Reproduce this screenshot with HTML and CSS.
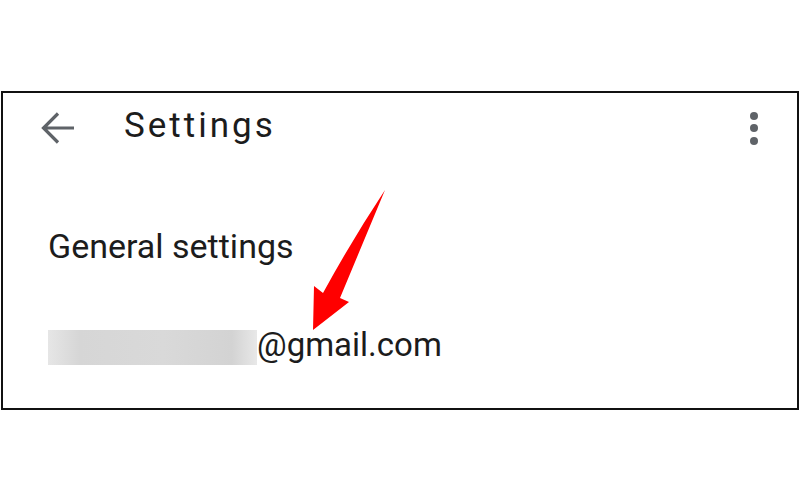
FILE: index.html
```html
<!DOCTYPE html>
<html lang="en">
<head>
    <meta charset="UTF-8">
    <title>Settings</title>
    <link rel="stylesheet" href="styles.css">
</head>
<body>
    <div class="screen">
        <div class="toolbar">
            <button class="icon-btn back" aria-label="Back">
                <svg width="36" height="36" viewBox="0 0 36 36">
                    <path d="M34 18H4M18 3.5L3.5 18L18 32.5" fill="none" stroke="#5f6368" stroke-width="3.2"/>
                </svg>
            </button>
            <h1>Settings</h1>
            <button class="icon-btn more" aria-label="More options">
                <span class="dot"></span>
                <span class="dot"></span>
                <span class="dot"></span>
            </button>
        </div>
        <div class="list">
            <div class="item">General settings</div>
            <div class="item account"><span class="blur"></span>@gmail.com</div>
        </div>
        <!-- red pointer drawn over the list -->
        <svg class="pointer" width="100" height="155" viewBox="0 0 100 155">
            <path d="M95 10 Q70 70 50 118 L59 122 L23 150 L24 106 L33 113 Q62 60 95 10 Z" fill="#ff0000"/>
        </svg>
    </div>
</body>
</html>
```

FILE: styles.css
```css
body {
    margin: 0;
    background-color: #fff;
    font-family: Roboto, "Noto Sans", sans-serif;
    color: #1c1c1c;
}
.screen {
    position: relative;
    margin-top: 91px;
    margin-left: 1px;
    width: 794px;
    height: 315px;
    border: 2px solid #111;
    background-color: #fff;
}
.toolbar {
    display: flex;
    align-items: center;
    height: 70px;
    padding-left: 37px;
}
.icon-btn {
    background: none;
    border: none;
    padding: 0;
    cursor: pointer;
}
.back {
    width: 36px;
    height: 36px;
    display: flex;
}
.toolbar h1 {
    flex: 1;
    margin: 0 0 5px 48px;
    font-size: 35px;
    font-weight: 400;
    letter-spacing: 3px;
}
.more {
    display: flex;
    flex-direction: column;
    align-items: center;
    gap: 4.5px;
    width: 20px;
    margin-right: 33px;
}
.dot {
    width: 8px;
    height: 8px;
    border-radius: 50%;
    background-color: #5f6368;
}
.list {
    padding: 63px 0 0 45px;
}
.item {
    font-size: 34px;
    line-height: 40px;
}
.item + .item {
    margin-top: 59px;
}
.account {
    font-size: 33px;
}
.blur {
    display: inline-block;
    width: 209px;
    height: 35px;
    vertical-align: -9px;
    background: linear-gradient(90deg, #e6e6e6, #d6d6d6 15%, #d9d9d9 55%, #d3d3d3 88%, #e8e8e8);
}
.pointer {
    position: absolute;
    left: 287px;
    top: 87px;
}
```
